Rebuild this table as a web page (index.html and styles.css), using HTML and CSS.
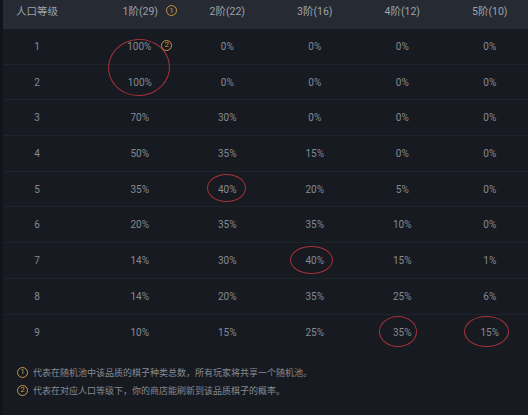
FILE: index.html
```html
<!DOCTYPE html>
<html lang="zh-CN">
<head>
  <meta charset="UTF-8" />
  <title>棋子概率</title>
  <link rel="stylesheet" href="styles.css">
</head>
<body>
  <div class="board">
    <div class="row head">
      <div class="cell lvl">人口等级</div>
      <div class="cell with-num">1阶(29)<span class="num">1</span></div>
      <div class="cell">2阶(22)</div>
      <div class="cell">3阶(16)</div>
      <div class="cell">4阶(12)</div>
      <div class="cell">5阶(10)</div>
    </div>
    <div class="row">
      <div class="cell lvl">1</div>
      <div class="cell with-num">100%<span class="num num-side">2</span><span class="mark mark-pair"></span></div>
      <div class="cell">0%</div><div class="cell">0%</div><div class="cell">0%</div><div class="cell">0%</div>
    </div>
    <div class="row">
      <div class="cell lvl">2</div>
      <div class="cell">100%</div>
      <div class="cell">0%</div><div class="cell">0%</div><div class="cell">0%</div><div class="cell">0%</div>
    </div>
    <div class="row">
      <div class="cell lvl">3</div>
      <div class="cell">70%</div><div class="cell">30%</div><div class="cell">0%</div><div class="cell">0%</div><div class="cell">0%</div>
    </div>
    <div class="row">
      <div class="cell lvl">4</div>
      <div class="cell">50%</div><div class="cell">35%</div><div class="cell">15%</div><div class="cell">0%</div><div class="cell">0%</div>
    </div>
    <div class="row">
      <div class="cell lvl">5</div>
      <div class="cell">35%</div>
      <div class="cell">40%<span class="mark mark-b"></span></div>
      <div class="cell">20%</div><div class="cell">5%</div><div class="cell">0%</div>
    </div>
    <div class="row">
      <div class="cell lvl">6</div>
      <div class="cell">20%</div><div class="cell">35%</div><div class="cell">35%</div><div class="cell">10%</div><div class="cell">0%</div>
    </div>
    <div class="row">
      <div class="cell lvl">7</div>
      <div class="cell">14%</div><div class="cell">30%</div>
      <div class="cell">40%<span class="mark mark-c"></span></div>
      <div class="cell">15%</div><div class="cell">1%</div>
    </div>
    <div class="row">
      <div class="cell lvl">8</div>
      <div class="cell">14%</div><div class="cell">20%</div><div class="cell">35%</div><div class="cell">25%</div><div class="cell">6%</div>
    </div>
    <div class="row last">
      <div class="cell lvl">9</div>
      <div class="cell">10%</div><div class="cell">15%</div><div class="cell">25%</div>
      <div class="cell">35%<span class="mark mark-d"></span></div>
      <div class="cell">15%<span class="mark mark-e"></span></div>
    </div>
  </div>

  <div class="notes">
    <p><span class="num">1</span>代表在随机池中该品质的棋子种类总数，所有玩家将共享一个随机池。</p>
    <p><span class="num">2</span>代表在对应人口等级下，你的商店能刷新到该品质棋子的概率。</p>
  </div>
</body>
</html>
```

FILE: styles.css
```css
/* dark stat table */
:root {
  --bg: #171a21;
  --head: #252a33;
  --line: #1f232b;
  --text: #858a91;
  --text-head: #9ea2a8;
  --gold: #c99540;
  --red: #a5323a;
}
* { box-sizing: border-box; }
html, body { margin: 0; height: 100%; }
body {
  background: var(--bg);
  border-left: 3px solid #11141a;
  overflow: hidden;
  font-family: Roboto, "Noto Sans CJK SC", sans-serif;
  color: var(--text);
}

.board { width: 534px; margin-left: -3px; }

.row {
  display: grid;
  grid-template-columns: 96px repeat(5, 87.5px);
  height: 35.7px;
  border-bottom: 1px solid var(--line);
}
.row.last { border-bottom: none; }
.row.head {
  height: 29px;
  background: var(--head);
  border-bottom: none;
  color: var(--text-head);
}

.cell {
  position: relative;
  display: flex;
  align-items: center;
  justify-content: center;
  font-size: 10px;
}
.head .cell { font-size: 10.5px; padding-bottom: 8px; }
.cell.lvl { padding-right: 22px; }
.cell.with-num { padding-left: 20px; }

.num {
  display: inline-flex;
  align-items: center;
  justify-content: center;
  flex: none;
  width: 11px;
  height: 11px;
  margin-left: 8px;
  border: 1px solid var(--gold);
  border-radius: 50%;
  color: var(--gold);
  font-size: 8px;
  line-height: 1;
}
.num-side { margin-left: 10px; margin-top: -2px; }

/* red hand-drawn rings over the values */
.mark {
  position: absolute;
  left: 50%;
  top: 50%;
  border: 1.5px solid var(--red);
  border-radius: 50%;
}
.mark-pair { width: 62px; height: 57px; margin: -7px 0 0 -32px; transform: rotate(-4deg); }
.mark-b { width: 39px; height: 28px; margin: -15px 0 0 -20px; }
.mark-c { width: 43px; height: 28px; margin: -14px 0 0 -25px; }
.mark-d { width: 38px; height: 31px; margin: -16px 0 0 -23px; }
.mark-e { width: 45px; height: 31px; margin: -16px 0 0 -26px; }

.notes {
  padding: 13px 0 0 14px;
  font-size: 9px;
  color: var(--text);
}
.notes p {
  margin: 0;
  display: flex;
  align-items: center;
  height: 18px;
}
.notes .num { margin: 0 5px 0 0; }
```
